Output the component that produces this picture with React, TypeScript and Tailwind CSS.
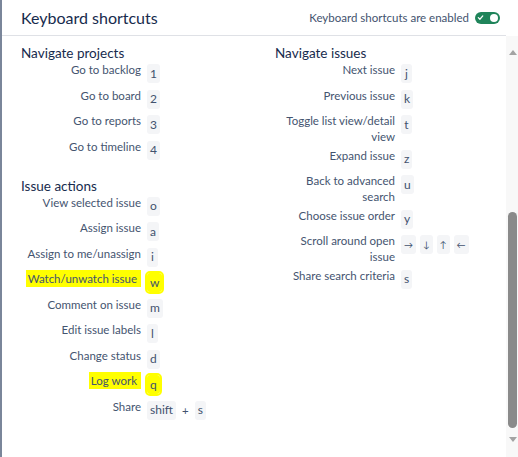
import React from 'react';

type Row = { label: string; keys: string[]; mark?: boolean };

const navProjects: Row[] = [
  { label: 'Go to backlog', keys: ['1'] },
  { label: 'Go to board', keys: ['2'] },
  { label: 'Go to reports', keys: ['3'] },
  { label: 'Go to timeline', keys: ['4'] },
];

const issueActions: Row[] = [
  { label: 'View selected issue', keys: ['o'] },
  { label: 'Assign issue', keys: ['a'] },
  { label: 'Assign to me/unassign', keys: ['i'] },
  { label: 'Watch/unwatch issue', keys: ['w'], mark: true },
  { label: 'Comment on issue', keys: ['m'] },
  { label: 'Edit issue labels', keys: ['l'] },
  { label: 'Change status', keys: ['d'] },
  { label: 'Log work', keys: ['q'], mark: true },
  { label: 'Share', keys: ['shift', '+', 's'] },
];

const navIssues: Row[] = [
  { label: 'Next issue', keys: ['j'] },
  { label: 'Previous issue', keys: ['k'] },
  { label: 'Toggle list view/detail view', keys: ['t'] },
  { label: 'Expand issue', keys: ['z'] },
  { label: 'Back to advanced search', keys: ['u'] },
  { label: 'Choose issue order', keys: ['y'] },
  { label: 'Scroll around open issue', keys: ['→', '↓', '↑', '←'] },
  { label: 'Share search criteria', keys: ['s'] },
];

const arrows = ['→', '↓', '↑', '←'];

function Key({ k, mark }: { k: string; mark?: boolean }) {
  if (k === '+') {
    return <span className="mt-[4px] px-[2px] text-[11.5px] leading-[16px] text-[#42526e]">+</span>;
  }
  const isArrow = arrows.includes(k);
  return (
    <kbd
      className={`mt-[2px] h-[19px] min-w-[11px] rounded-[3px] flex items-center justify-center leading-none font-['Lato',sans-serif] text-[#42526e] ${
        isArrow ? 'text-[9px] px-[3px]' : 'text-[12px] px-[3px]'
      } ${mark ? 'bg-[#ffff00] outline-2 outline-[#ffff00]' : 'bg-[#f4f5f7]'}`}
    >
      {k}
    </kbd>
  );
}

function ShortcutRow({ row }: { row: Row }) {
  return (
    <div className="flex items-start gap-[6px] min-h-[23px] mb-[2.5px]">
      <div className="w-[120px] shrink-0 text-right text-[11.5px] leading-[16px] text-[#44546f]">
        {row.mark ? <span className="bg-[#ffff00] py-[2px] pl-[2px] pr-[4px]">{row.label}</span> : row.label}
      </div>
      <div className="flex items-start gap-[4px]">
        {row.keys.map((k, i) => (
          <Key key={i} k={k} mark={row.mark} />
        ))}
      </div>
    </div>
  );
}

function Section({ title, rows, className = '' }: { title: string; rows: Row[]; className?: string }) {
  return (
    <section className={className}>
      <h3 className="text-[13.5px] leading-[18px] text-[#172b4d]">{title}</h3>
      {rows.map((r) => (
        <ShortcutRow key={r.label} row={r} />
      ))}
    </section>
  );
}

function Toggle() {
  return (
    <div className="w-[25px] h-[12px] rounded-full bg-[#1f845a] flex items-center justify-between px-[2px]">
      <svg width="7" height="7" viewBox="0 0 8 8" fill="none">
        <path d="M1.5 4.2L3.3 6L6.6 2.2" stroke="white" strokeWidth="1.4" strokeLinecap="round" strokeLinejoin="round" />
      </svg>
      <span className="w-[8px] h-[8px] rounded-full bg-white" />
    </div>
  );
}

export default function App() {
  return (
    <div className="w-[518px] h-[457px] bg-white flex flex-col border-l-2 border-[#7a869a] overflow-hidden font-['Lato',sans-serif]">
      {/* Header */}
      <header className="w-[504px] h-[36px] shrink-0 border-b border-[#dfe1e6] flex items-center justify-between pl-[19px] pr-[6px]">
        <h2 className="text-[16px] leading-[20px] text-[#172b4d]">Keyboard shortcuts</h2>
        <div className="flex items-center gap-[6px] text-[11.5px] text-[#42526e]">
          <span>Keyboard shortcuts are enabled</span>
          <Toggle />
        </div>
      </header>

      <div className="flex flex-1 min-h-0">
        {/* Columns */}
        <div className="flex-1 grid grid-cols-[254px_1fr] pl-[19px] pt-[8px]">
          <div>
            <Section title="Navigate projects" rows={navProjects} />
            <Section title="Issue actions" rows={issueActions} className="mt-[15px]" />
          </div>
          <div>
            <Section title="Navigate issues" rows={navIssues} />
          </div>
        </div>

        {/* Scrollbar */}
        <div className="w-[12px] shrink-0 bg-[#f8f8f8] flex flex-col items-center pl-[1px]">
          <div className="h-[24px] flex items-end justify-center pb-[5px]">
            <svg width="8" height="5" viewBox="0 0 8 5">
              <path d="M0 5L4 0L8 5Z" fill="#a3a3a3" />
            </svg>
          </div>
          <div className="h-[152px]" />
          <div className="w-[9px] h-[216px] rounded-full bg-[#8a8a8a]" />
          <div className="h-[9px]" />
          <svg width="8" height="5" viewBox="0 0 8 5">
            <path d="M0 0L8 0L4 5Z" fill="#a3a3a3" />
          </svg>
        </div>
      </div>
    </div>
  );
}
